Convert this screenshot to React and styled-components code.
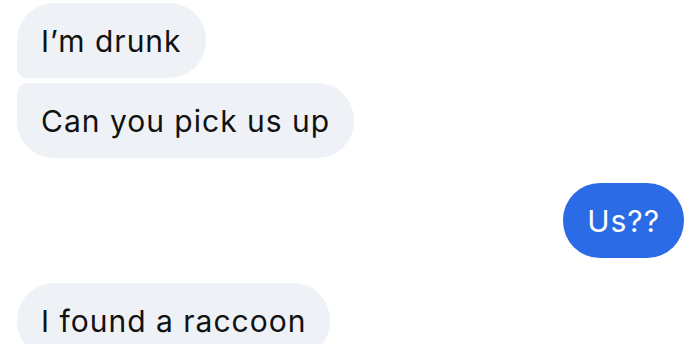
import React from 'react';
import styled, {createGlobalStyle} from 'styled-components';

const Global = createGlobalStyle`
    body {
        margin: 0;
        background: #ffffff;
        font-family: Inter, "Liberation Sans", sans-serif;
    }
`

const messages = [
    {text: "I’m drunk", mine: false, group: "first"},
    {text: "Can you pick us up", mine: false, group: "last"},
    {text: "Us??", mine: true, group: "single"},
    {text: "I found a raccoon", mine: false, group: "single"},
];

const radius = (group) => {
    if (group === "first") return "37px 37px 37px 10px";
    if (group === "last") return "10px 37px 37px 37px";
    return "37px";
};

const App = () => {
    return (
        <Thread>
            <Global/>
            {messages.map((m, i) =>
                <Row key={i} mine={m.mine} spaced={i > 0 && m.group !== "last"}>
                    <Bubble mine={m.mine} group={m.group}>{m.text}</Bubble>
                </Row>
            )}
        </Thread>
    );
};

export default App;

const Thread = styled.div`
    width: 700px;
    height: 344px;
    overflow: hidden;
    box-sizing: border-box;
    padding: 3px 16px 0 17px;
    display: flex;
    flex-direction: column;
    gap: 5px;
    `
const Row = styled.div`
    display: flex;
    justify-content: ${props => props.mine ? "flex-end" : "flex-start"};
    margin-top: ${props => props.spaced ? "20px" : "0"};
    flex-shrink: 0;
    `
const Bubble = styled.div`
    height: 75px;
    box-sizing: border-box;
    padding: 0 24px;
    display: flex;
    align-items: center;
    border-radius: ${props => radius(props.group)};
    background: ${props => props.mine ? "#2b6be6" : "#eef1f5"};
    color: ${props => props.mine ? "#ffffff" : "#111111"};
    font-size: 30px;
    letter-spacing: 1px;
    white-space: nowrap;
    `
